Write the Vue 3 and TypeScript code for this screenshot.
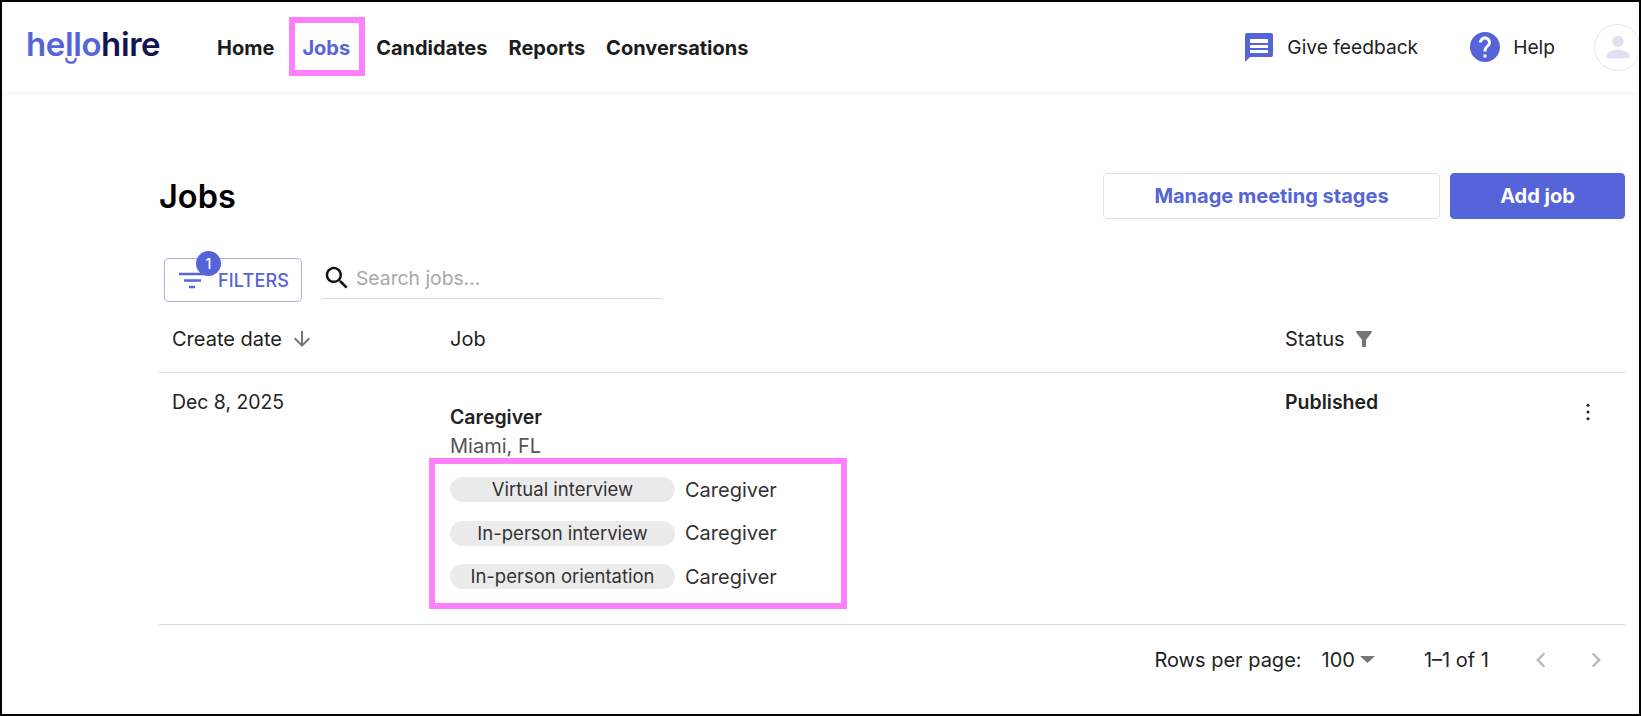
<template>
  <div class="page">
    <header class="topbar">
      <div class="logo">
        <span class="logo-hello">hello</span><span class="logo-hire">hire</span>
        <svg class="logo-smile" viewBox="0 0 14 8" width="12" height="8">
          <path d="M1.5 1.5c0 3 2.5 4.5 5.500 4.500s5.500-1.500 5.500-4.500" fill="none" stroke="#5664d9" stroke-width="2.6" stroke-linecap="round" />
        </svg>
      </div>
      <nav class="nav">
        <a v-for="item in navItems" :key="item" class="nav-link" :class="{ active: item === 'Jobs' }">{{ item }}</a>
      </nav>
      <div class="topbar-right">
        <a class="top-action feedback">
          <svg width="30" height="30" viewBox="0 0 30 30">
            <path fill="#5664d9" fill-rule="evenodd" d="M3 1h24a2 2 0 0 1 2 2v20a2 2 0 0 1-2 2H6l-5 5V3a2 2 0 0 1 2-2zM6 7v4h18V7zm0 6v3h18v-3zm0 5v3h18v-3z" />
          </svg>
          <span>Give feedback</span>
        </a>
        <a class="top-action help">
          <svg width="30" height="30" viewBox="2 2 20 20">
            <path fill="#5664d9" d="M12 2C6.48 2 2 6.48 2 12s4.48 10 10 10 10-4.48 10-10S17.52 2 12 2zm1 17h-2v-2h2v2zm2.070-7.750l-.9.920C13.450 12.900 13 13.500 13 15h-2v-.5c0-1.100.45-2.100 1.170-2.830l1.240-1.260c.37-.36.59-.86.59-1.410 0-1.100-.9-2-2-2s-2 .9-2 2H8c0-2.210 1.790-4 4-4s4 1.790 4 4c0 .88-.36 1.680-.93 2.250z" />
          </svg>
          <span>Help</span>
        </a>
        <div class="avatar">
          <svg width="34" height="34" viewBox="0 0 24 24">
            <path fill="#dfe1ee" d="M12 12c2.210 0 4-1.790 4-4s-1.790-4-4-4-4 1.790-4 4 1.790 4 4 4zm0 2c-2.670 0-8 1.340-8 4v2h16v-2c0-2.660-5.330-4-8-4z" />
          </svg>
        </div>
      </div>
    </header>

    <main class="content">
      <div class="title-row">
        <h1>Jobs</h1>
        <div class="title-actions">
          <button class="btn-outline">Manage meeting stages</button>
          <button class="btn-solid">Add job</button>
        </div>
      </div>

      <div class="toolbar">
        <button class="filters-btn">
          <svg class="filter-lines" width="28" height="18" viewBox="0 0 28 18">
            <path d="M0 2h28M5 8.500h17M10 15h6" stroke="#5664d9" stroke-width="2.600" fill="none" />
          </svg>
          <span class="filters-badge">1</span>
          <span>FILTERS</span>
        </button>
        <div class="search">
          <svg width="30" height="30" viewBox="0 0 24 24">
            <path fill="#111" d="M15.500 14h-.79l-.28-.27C15.410 12.590 16 11.110 16 9.500 16 5.910 13.090 3 9.500 3S3 5.910 3 9.500 5.910 16 9.500 16c1.610 0 3.090-.59 4.230-1.570l.27.28v.79l5 4.990L20.490 19l-4.990-5zm-6 0C7.010 14 5 11.990 5 9.500S7.010 5 9.500 5 14 7.010 14 9.500 11.990 14 9.500 14z" />
          </svg>
          <span class="search-placeholder">Search jobs...</span>
        </div>
      </div>

      <div class="table">
        <div class="table-head">
          <div class="head-cell sortable">
            Create date
            <svg width="24" height="24" viewBox="0 0 24 24">
              <path fill="#757575" d="M20 12l-1.410-1.410L13 16.170V4h-2v12.170l-5.580-5.590L4 12l8 8 8-8z" />
            </svg>
          </div>
          <div class="head-cell">Job</div>
          <div class="head-cell">
            Status
            <svg class="funnel" width="24" height="24" viewBox="0 0 24 24">
              <path fill="#757575" d="M4.250 5.610C6.270 8.200 10 13 10 13v6c0 .55.45 1 1 1h2c.55 0 1-.45 1-1v-6s3.720-4.800 5.740-7.390c.51-.66.04-1.610-.79-1.610H5.040c-.83 0-1.300.95-.79 1.610z" />
            </svg>
          </div>
        </div>

        <div class="table-row">
          <div class="date-cell">Dec 8, 2025</div>
          <div class="job-cell">
            <div class="job-name">Caregiver</div>
            <div class="job-location">Miami, FL</div>
            <div class="stages">
              <div v-for="stage in stages" :key="stage" class="stage-row">
                <span class="chip">{{ stage }}</span>
                <span class="stage-role">Caregiver</span>
              </div>
            </div>
          </div>
          <div class="status-cell">
            <span>Published</span>
            <svg class="more" width="20" height="20" viewBox="0 0 20 20">
              <circle cx="10" cy="3.300" r="1.500" fill="#222" />
              <circle cx="10" cy="10" r="1.500" fill="#222" />
              <circle cx="10" cy="16.700" r="1.500" fill="#222" />
            </svg>
          </div>
        </div>

        <div class="pagination">
          <span>Rows per page:</span>
          <span class="rows-select">
            100
            <svg width="16" height="8" viewBox="0 0 16 8"><path fill="#757575" d="M0 0h15L7.500 7z" /></svg>
          </span>
          <span class="range">1–1 of 1</span>
          <svg class="pager" width="30" height="30" viewBox="0 0 24 24">
            <path fill="#bdbdbd" d="M15.410 7.410 14 6l-6 6 6 6 1.410-1.410L10.830 12z" />
          </svg>
          <svg class="pager next" width="30" height="30" viewBox="0 0 24 24">
            <path fill="#bdbdbd" d="M10 6 8.590 7.410 13.170 12l-4.580 4.590L10 18l6-6z" />
          </svg>
        </div>
      </div>
    </main>
  </div>
</template>

<script setup lang="ts">
const navItems: string[] = ['Home', 'Jobs', 'Candidates', 'Reports', 'Conversations'];
const stages: string[] = ['Virtual interview', 'In-person interview', 'In-person orientation'];
</script>

<style>
html,
body {
  margin: 0;
  background: #fff;
}
</style>

<style scoped>
.page {
  box-sizing: border-box;
  width: 1641px;
  height: 716px;
  border: 2px solid #000;
  overflow: hidden;
  font-family: Inter, "Liberation Sans", sans-serif;
  font-size: 20px;
  color: #222;
  background: #fff;
}

.topbar {
  display: flex;
  align-items: center;
  height: 90px;
  padding-left: 24px;
  box-shadow: 0 1px 6px rgba(0, 0, 0, 0.06);
}

.logo {
  position: relative;
  font-size: 33px;
  font-weight: 600;
  letter-spacing: -0.4px;
  line-height: 40px;
  width: 134px;
  margin-top: -6px;
  white-space: nowrap;
}

.logo-hello {
  color: #5664d9;
}

.logo-hire {
  color: #12134f;
}

.logo-smile {
  position: absolute;
  left: 39px;
  top: 33px;
}

.nav {
  display: flex;
  gap: 21px;
  margin-left: 57px;
  padding-top: 1px;
}

.nav-link {
  position: relative;
  font-weight: 700;
  font-size: 20px;
  color: #1c1c1c;
}

.nav-link.active {
  margin: 0 5px 0 7px;
  color: #5664d9;
}

.nav-link.active::after {
  content: "";
  position: absolute;
  left: -13px;
  right: -15px;
  top: -19px;
  bottom: -16px;
  border: 6px solid #ff80ff;
}

.topbar-right {
  display: flex;
  align-items: center;
  margin-left: auto;
}

.top-action {
  display: flex;
  align-items: center;
  gap: 13px;
  font-size: 19.2px;
}

.help {
  margin-left: 52px;
}

.avatar {
  display: flex;
  align-items: center;
  justify-content: center;
  box-sizing: border-box;
  width: 47px;
  height: 47px;
  margin-left: 39px;
  margin-right: -2px;
  border: 1px solid #e3e3f0;
  border-radius: 50%;
}

.content {
  padding: 81px 14px 0 157px;
}

.title-row {
  display: flex;
  align-items: center;
  justify-content: space-between;
}

h1 {
  margin: 0;
  font-size: 32.5px;
  font-weight: 600;
  color: #000;
}

.title-actions {
  display: flex;
  gap: 10px;
}

.title-actions button {
  height: 46px;
  font-family: inherit;
  font-size: 20px;
  font-weight: 700;
  border-radius: 4px;
}

.btn-outline {
  width: 337px;
  background: #fff;
  border: 1px solid #e1e0f0;
  color: #5664d9;
}

.btn-solid {
  width: 175px;
  background: #5664d9;
  border: 1px solid #5664d9;
  color: #fff;
}

.toolbar {
  display: flex;
  align-items: flex-start;
  margin-top: 39px;
  margin-left: 5px;
}

.filters-btn {
  position: relative;
  display: flex;
  align-items: center;
  justify-content: flex-end;
  box-sizing: border-box;
  width: 138px;
  height: 44px;
  padding: 0 12px 0 0;
  background: #fff;
  border: 1px solid #aab1ec;
  border-radius: 5px;
  font-family: inherit;
  font-size: 18px;
  font-weight: 500;
  letter-spacing: 0.15px;
  color: #5664d9;
}

.filter-lines {
  position: absolute;
  left: 14px;
  top: 13px;
}

.filters-badge {
  position: absolute;
  left: 31px;
  top: -8px;
  width: 25px;
  height: 25px;
  line-height: 25px;
  border-radius: 50%;
  background: #5664d9;
  color: #fff;
  font-size: 14px;
  text-align: center;
}

.search {
  display: flex;
  align-items: center;
  gap: 4px;
  box-sizing: border-box;
  width: 340px;
  height: 41px;
  margin-left: 20px;
  font-size: 19.3px;
  border-bottom: 1px solid #ddd;
}

.search-placeholder {
  color: #a8a8a8;
}

.table-head,
.table-row {
  display: grid;
  grid-template-columns: 278px 835px 1fr;
  padding-left: 13px;
}

.table-head {
  align-items: center;
  height: 71px;
  border-bottom: 1px solid #ddd;
  box-sizing: border-box;
  padding-top: 3px;
}

.head-cell {
  display: flex;
  align-items: center;
  gap: 7px;
}

.sortable {
  gap: 8px;
}

.table-row {
  box-sizing: border-box;
  height: 252px;
  border-bottom: 1px solid #ddd;
}

.date-cell {
  padding-top: 17px;
  font-size: 19.4px;
}

.status-cell {
  position: relative;
  padding-top: 17px;
  font-size: 19.5px;
  font-weight: 600;
}

.more {
  position: absolute;
  right: 27px;
  top: 29px;
}

.job-cell {
  padding-top: 32px;
}

.job-name {
  font-size: 19.5px;
  font-weight: 600;
  line-height: 24px;
}

.job-location {
  margin-top: 5px;
  line-height: 24px;
  color: #555;
}

.stages {
  position: relative;
  display: flex;
  flex-direction: column;
  gap: 18.5px;
  margin-top: 19px;
}

.stages::after {
  content: "";
  position: absolute;
  left: -21px;
  top: -19px;
  width: 418px;
  height: 151px;
  box-sizing: border-box;
  border: 6px solid #ff80ff;
}

.stage-row {
  display: flex;
  align-items: center;
  gap: 10px;
  height: 25px;
}

.chip {
  width: 225px;
  height: 25px;
  line-height: 25px;
  border-radius: 13px;
  background: #ebebeb;
  text-align: center;
  font-size: 18.5px;
  color: #333;
}

.stage-role {
  color: #333;
}

.pagination {
  display: flex;
  align-items: center;
  justify-content: flex-end;
  height: 70px;
  padding-right: 14px;
}

.rows-select {
  display: flex;
  align-items: center;
  gap: 5px;
  margin-left: 20px;
}

.range {
  margin-left: 48px;
  margin-right: 37px;
}

.next {
  margin-left: 25px;
}
</style>
